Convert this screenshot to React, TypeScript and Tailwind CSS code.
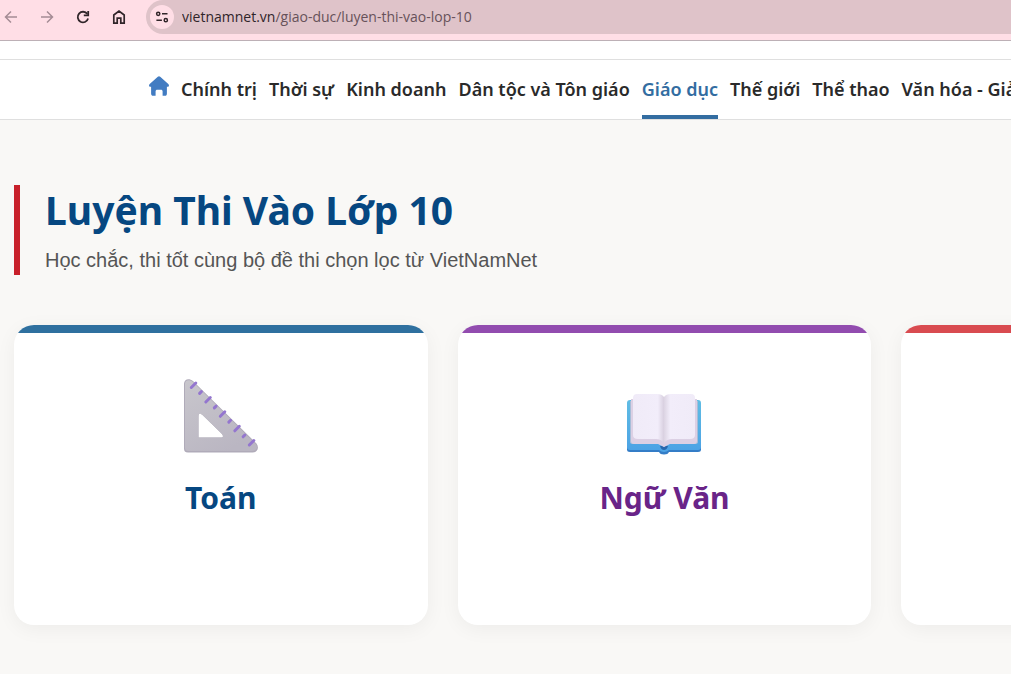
import React from "react";

const navItems = [
  "Chính trị",
  "Thời sự",
  "Kinh doanh",
  "Dân tộc và Tôn giáo",
  "Giáo dục",
  "Thế giới",
  "Thể thao",
  "Văn hóa - Giải trí",
];

function ArrowIcon({ flip = false }: { flip?: boolean }) {
  return (
    <svg viewBox="0 0 14 14" className={flip ? "size-3.5 rotate-180" : "size-3.5"} fill="none" stroke="currentColor" strokeWidth="1.5" aria-hidden="true">
      <path d="M13 7H1.8M7 1.5 1.5 7 7 12.5" />
    </svg>
  );
}

function ReloadIcon() {
  return (
    <svg viewBox="0 0 14 14" className="size-3.5" fill="none" stroke="currentColor" strokeWidth="1.8" aria-hidden="true">
      <path d="M12.1 8.6A5.3 5.3 0 1 1 11.3 3.9" />
      <path d="M12.2 1v4.4H7.8" />
    </svg>
  );
}

function HomeOutlineIcon() {
  return (
    <svg viewBox="0 0 14 16" className="h-4 w-3.5" fill="none" stroke="currentColor" strokeWidth="1.7" aria-hidden="true">
      <path d="M1.8 6 7 2l5.2 4v8.1H8.8V9.2H5.2v4.9H1.8z" />
    </svg>
  );
}

function SiteSettingsIcon() {
  return (
    <svg viewBox="0 0 14 14" className="size-3.5" fill="none" stroke="currentColor" strokeWidth="1.5" aria-hidden="true">
      <circle cx="3.2" cy="3.8" r="1.6" />
      <path d="M7 3.8h5.5M1.4 10.2h5.5" />
      <circle cx="10.8" cy="10.2" r="1.6" />
    </svg>
  );
}

function HomeIcon() {
  return (
    <svg viewBox="0 0 20 20" className="size-5" fill="#427cc2" aria-hidden="true">
      <path d="M8.8.8a1.8 1.8 0 0 1 2.4 0l8.1 7.2c1.2 1.1.7 2.7-.7 2.7h-.7v6.8c0 1.5-.6 2.3-1.9 2.3h-2.4v-4.2c0-1.3-.6-1.9-1.7-1.9H8.3c-1.1 0-1.7.6-1.7 1.9v4.2H4.2c-1.3 0-2.1-.8-2.1-2.3v-6.8h-.7C0 10.7-.5 9.1.7 8z" />
    </svg>
  );
}

function SetSquareIcon() {
  return (
    <svg viewBox="0 0 80 80" className="size-20" aria-hidden="true">
      <defs>
        <linearGradient id="square" x1="0" y1="0" x2="0.6" y2="1">
          <stop stopColor="#c8c6cc" />
          <stop offset="1" stopColor="#bab6c2" />
        </linearGradient>
      </defs>
      <path fillRule="evenodd" fill="#b0abb9" d="M3 8C3 3 8 2 12 5L75.500 67.500c3 4 1 9-4 9H7c-3 0-4-1.500-4-4zM17.500 61.500h22c3 0 3-1.500 1.500-3.500L21.500 39c-2.500-2.500-4-2-4 1.500z" />
      <path fillRule="evenodd" fill="url(#square)" d="M4 8C4 4 8 3 12 6L74.500 68c3 3.500 1 7-3.500 7H7.500C5 75 4 74 4 71.500zM17.500 61.500h22c3 0 3-1.500 1.500-3.500L21.500 39c-2.500-2.500-4-2-4 1.500z" />
      <g stroke="#9476cf" strokeWidth="3" strokeLinecap="round">
        <path d="m10.300 11.500 4.500-4.500M24.800 26l4.500-4.500M39.300 40.300l4.500-4.500M53.800 54.800l4.500-4.500M68.300 69l4.500-4.500" />
        <path d="m18.600 17.400 1.800-1.800M33.300 31.900l1.800-1.800M47.800 46.100l1.800-1.800M62.100 60.800l1.800-1.800" />
      </g>
    </svg>
  );
}

function BookIcon() {
  return (
    <svg viewBox="0 0 80 80" className="size-20" aria-hidden="true">
      <defs>
        <linearGradient id="cover" x1="0" y1="0" x2="0" y2="1">
          <stop stopColor="#60bde4" />
          <stop offset="1" stopColor="#4ba2e5" />
        </linearGradient>
        <linearGradient id="leftPage">
          <stop stopColor="#f0ebf8" />
          <stop offset="0.8" stopColor="#f2edfa" />
          <stop offset="1" stopColor="#d8cfdf" />
        </linearGradient>
        <linearGradient id="rightPage">
          <stop stopColor="#dcd4e3" />
          <stop offset="0.2" stopColor="#f2edfa" />
          <stop offset="1" stopColor="#f0ebf8" />
        </linearGradient>
      </defs>
      <path fill="#347dc7" d="M3 65h74v8.500q0 2.500-3 2.500H45q-1 2.500-5 2.500T35 76H6q-3 0-3-2.500z" />
      <path fill="url(#cover)" d="M6 24h68q3 0 3 3v44q0 3-3 3H45q-5 4-10 0H6q-3 0-3-3V27q0-3 3-3z" />
      <path fill="#2967ad" d="M36 70h8q-1 4-4 4t-4-4z" />
      <path fill="#a7bdd8" d="M6 25h68v41q0 2-3 2H44l-4 3-4-3H9q-3 0-3-2z" />
      <path fill="#dcd0e4" d="M7 23h66v42q0 3-3 3H46l-6 3-6-3H10q-3 0-3-3z" />
      <path fill="url(#leftPage)" d="M13 18h20q5 0 7 3v46q-3-4-8-4H14q-5 0-5-4V22q0-4 4-4z" />
      <path fill="url(#rightPage)" d="M40 21q2-3 7-3h20q4 0 4 4v37q0 4-5 4H48q-5 0-8 4z" />
    </svg>
  );
}

const subjects = [
  { name: "Toán", bar: "bg-[#2f709f]", text: "text-[#064781]", icon: <SetSquareIcon /> },
  { name: "Ngữ Văn", bar: "bg-[#924caf]", text: "text-[#692488]", icon: <BookIcon /> },
  { name: "", bar: "bg-[#d94b50]", text: "text-[#a8282d]", icon: null },
];

function BrowserBar() {
  return (
    <div className="flex h-[41px] items-start border-b border-[#bdb0b6] bg-[#ffdee6] text-[#302529]">
      <div className="flex h-[34px] shrink-0 items-center gap-[22px] pl-1">
        <button type="button" aria-label="Back" className="text-[#a58c95]"><ArrowIcon /></button>
        <button type="button" aria-label="Forward" className="text-[#a58c95]"><ArrowIcon flip /></button>
        <button type="button" aria-label="Reload"><ReloadIcon /></button>
        <button type="button" aria-label="Home"><HomeOutlineIcon /></button>
      </div>
      <div className="ml-5 flex h-[34px] min-w-0 flex-1 items-center gap-2 rounded-l-full bg-[#dfc3c9] pl-1">
        <button type="button" aria-label="Site information" className="flex size-6 shrink-0 items-center justify-center rounded-full bg-[#ffdee6]">
          <SiteSettingsIcon />
        </button>
        <div className="truncate font-['Open_Sans',sans-serif] text-[14px] leading-5 text-[#67525a]">
          <span className="text-[#302529]">vietnamnet.vn</span>/giao-duc/luyen-thi-vao-lop-10
        </div>
      </div>
    </div>
  );
}

export default function App() {
  return (
    <div className="flex min-h-screen flex-col overflow-x-hidden bg-[#f9f8f6] font-['Noto_Sans',sans-serif]">
      <BrowserBar />
      <header className="bg-white pt-[18px]">
        <nav className="flex h-[61px] gap-3 overflow-hidden border-y border-[#dfdfdf] pl-[149px] text-[18px] leading-6 font-semibold whitespace-nowrap text-[#2a2a2a]">
          <a href="#home" aria-label="Trang chủ" className="shrink-0 pt-4"><HomeIcon /></a>
          {navItems.map((item) => (
            <a
              key={item}
              href="#"
              className={item === "Giáo dục" ? "shrink-0 border-b-4 border-[#336da1] pt-[17px] text-[#336da1]" : "shrink-0 pt-[17px]"}
            >
              {item}
            </a>
          ))}
        </nav>
      </header>
      <main className="px-3.5 pt-[65px] pb-12">
        <section className="border-l-6 border-[#c8202a] pl-[25px]">
          <h1 className="text-[39px] leading-[50px] font-bold text-[#064781]">Luyện Thi Vào Lớp 10</h1>
          <p className="pt-3 pb-0.5 font-['Liberation_Sans',sans-serif] text-[20px] leading-[26px] text-[#555]">
            Học chắc, thi tốt cùng bộ đề thi chọn lọc từ VietNamNet
          </p>
        </section>
        <section className="mt-[50px] grid min-w-[1301px] grid-cols-3 gap-[30px]">
          {subjects.map((subject) => (
            <article key={subject.bar} className="h-[300px] rounded-[20px] bg-white shadow-[0_4px_20px_rgba(0,0,0,0.05)]">
              <div className="flex h-full flex-col items-center overflow-hidden rounded-[20px]">
                <div className={`h-2 w-full shrink-0 ${subject.bar}`} />
                <div className="mt-[43px]">{subject.icon}</div>
                {subject.name && (
                  <h2 className={`mt-[22px] text-[30px] leading-10 font-bold ${subject.text}`}>{subject.name}</h2>
                )}
              </div>
            </article>
          ))}
        </section>
      </main>
    </div>
  );
}
